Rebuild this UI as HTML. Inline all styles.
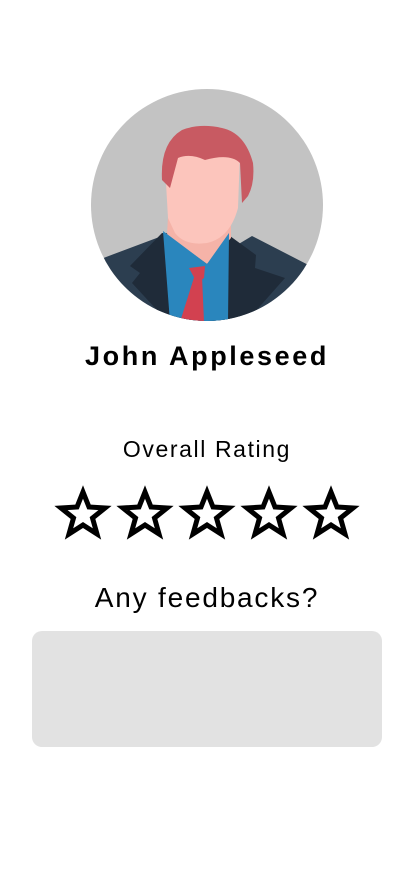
<!DOCTYPE html>
<html><head><style>
body{margin:0;width:414px;height:896px;background:#fff;font-family:"Liberation Sans",sans-serif;position:relative;overflow:hidden}
.t{position:absolute;left:0;width:414px;text-align:center;color:#000}
</style></head><body>
<svg style="position:absolute;left:90px;top:88px" width="234" height="234" viewBox="0 0 234 234">
<defs><clipPath id="c"><circle cx="117" cy="117" r="116"/></clipPath></defs>
<circle cx="117" cy="117" r="116" fill="#c3c3c3"/>
<g clip-path="url(#c)">
<path d="M0 175 L72 148 L117 175 L162 148 L234 185 L234 234 L0 234Z" fill="#2c3e50"/>
<path d="M72 145 L40 178 L50 185 L42 195 L78 234 L156 234 L195 190 L165 180 L166 167 L140 148Z" fill="#1f2b39"/>
<path d="M79 110 L141 110 L141 150 L117 176 L77 147Z" fill="#f5b3a8"/>
<path d="M73 143 L117 176 L139 145 L138 234 L80 234Z" fill="#2a86bd"/>
<path d="M99 180 L115 178 L114 190 L107 195 Z" fill="#d24150"/>
<path d="M107 180 L90 234 L114 234 L112 188Z" fill="#d24150"/>
<path d="M76 95 Q72 60 100 45 Q130 45 150 65 L148 120 Q140 150 117 155 Q95 158 85 145 L78 130Z" fill="#fcc5bc"/>
<path d="M72 92 Q70 55 92 42 Q110 35 132 40 Q155 45 163 75 Q165 95 158 108 L152 115 L150 75 Q140 65 115 72 Q100 65 88 70 L80 100 Z" fill="#c85a62"/>
</g>
</svg>
<div class="t" style="top:341px;font-size:27px;font-weight:bold;letter-spacing:2.6px">John Appleseed</div>
<div class="t" style="top:436px;font-size:23px;letter-spacing:1.6px">Overall Rating</div>
<svg style="position:absolute;left:0;top:484px" width="414" height="60">
<g fill="none" stroke="#000" stroke-width="5" stroke-linejoin="miter" stroke-miterlimit="3">
<path id="s" d="M83 8 L89 23 L105 24 L92.5 34 L97 50 L83 41 L69 50 L73.5 34 L61 24 L77 23Z"/>
<use href="#s" x="62"/><use href="#s" x="124"/><use href="#s" x="186"/><use href="#s" x="248"/>
</g></svg>
<div class="t" style="top:582px;font-size:28px;letter-spacing:1.8px">Any feedbacks?</div>
<div style="position:absolute;left:32px;top:631px;width:350px;height:116px;background:#e2e2e2;border-radius:10px"></div>
</body></html>
